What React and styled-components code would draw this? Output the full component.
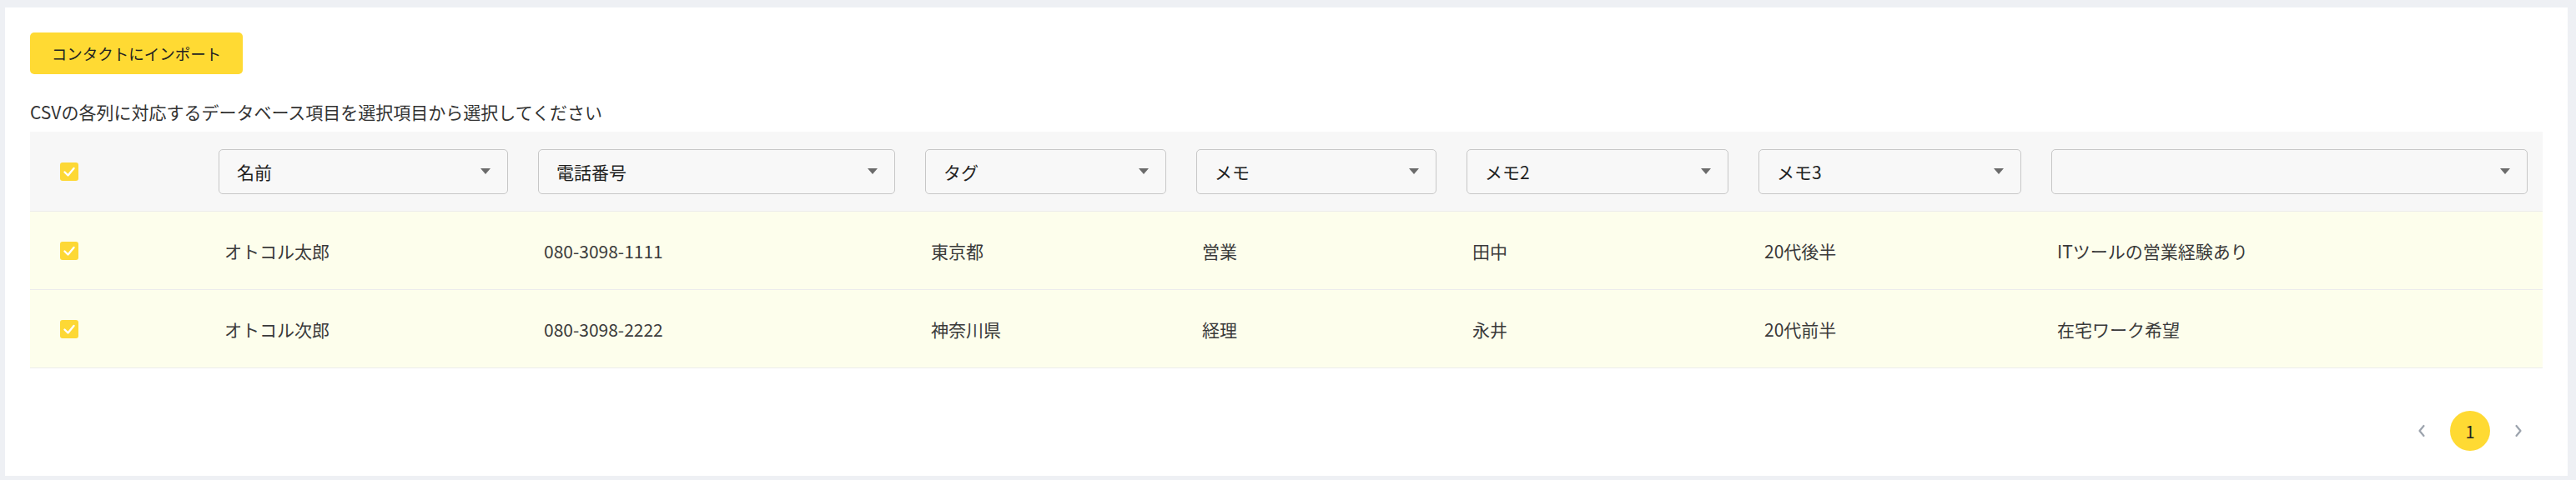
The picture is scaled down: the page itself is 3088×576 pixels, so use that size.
import React from 'react';
import styled, { createGlobalStyle } from 'styled-components';

const GlobalStyle = createGlobalStyle`
  body {
    margin: 0;
    background: #eef0f4;
    font-family: "Noto Sans CJK JP", "Noto Sans", sans-serif;
  }
`;

const columns = ['名前', '電話番号', 'タグ', 'メモ', 'メモ2', 'メモ3', ''];

const rows = [
  ['オトコル太郎', '080-3098-1111', '東京都', '営業', '田中', '20代後半', 'ITツールの営業経験あり'],
  ['オトコル次郎', '080-3098-2222', '神奈川県', '経理', '永井', '20代前半', '在宅ワーク希望'],
];

const Page = styled.div`
  padding: 9px 10px 5px 6px;
`;

const Panel = styled.section`
  background: #ffffff;
  height: 562px;
  box-sizing: border-box;
  padding: 30px;
  display: flex;
  flex-direction: column;
`;

const ImportButton = styled.button`
  align-self: flex-start;
  width: 255px;
  height: 50px;
  border: none;
  border-radius: 5px;
  background: #ffda33;
  color: #222222;
  font-family: inherit;
  font-size: 18.5px;
  cursor: pointer;
`;

const Guide = styled.p`
  margin: 30px 0 9px;
  font-size: 21px;
  line-height: 30px;
  color: #333333;
`;

const Table = styled.div`
  display: flex;
  flex-direction: column;
`;

const Row = styled.div`
  display: grid;
  grid-template-columns: 208px 383px 464px 325px 324px 350px 351px 1fr;
  align-items: center;
  height: ${(p) => (p.$head ? '96px' : '94px')};
  box-sizing: border-box;
  background: ${(p) => (p.$head ? '#f7f7f7' : '#fdfeec')};
  border-bottom: 1px solid #ececec;
`;

const CheckCell = styled.div`
  padding-left: 36px;
  display: flex;
  align-items: center;
`;

const Box = styled.span`
  width: 22px;
  height: 22px;
  border-radius: 3px;
  background: #fdd835;
  display: inline-flex;
  align-items: center;
  justify-content: center;

  svg {
    width: 22px;
    height: 22px;
  }
`;

const HeadCell = styled.div`
  padding: 0 18px;
`;

const Select = styled.div`
  height: 54px;
  box-sizing: border-box;
  border: 1px solid #c7c7c7;
  border-radius: 5px;
  background: #f8f8f8;
  display: flex;
  align-items: center;
  padding: 0 20px 0 21px;
  font-size: 21px;
  color: #1f1f1f;
`;

const Caret = styled.span`
  margin-left: auto;
  width: 0;
  height: 0;
  border-left: 6px solid transparent;
  border-right: 6px solid transparent;
  border-top: 7px solid #6b6b6b;
`;

const Cell = styled.div`
  padding-left: 25px;
  font-size: 21px;
  color: #3a3a3a;
  white-space: nowrap;
`;

const Pager = styled.nav`
  margin-top: auto;
  display: flex;
  justify-content: flex-end;
  align-items: center;
  gap: 18px;
  padding-right: 13px;
`;

const Arrow = styled.button`
  width: 32px;
  height: 32px;
  padding: 0;
  border: none;
  background: transparent;
  display: flex;
  align-items: center;
  justify-content: center;
`;

const PageNum = styled.span`
  width: 48px;
  height: 48px;
  border-radius: 50%;
  background: #ffda33;
  color: #222222;
  font-size: 20px;
  display: flex;
  align-items: center;
  justify-content: center;
`;

const Checkbox = () => (
  <Box>
    <svg viewBox="0 0 22 22">
      <polyline points="5.5,11.5 9.5,15.5 16.5,7" fill="none" stroke="#ffffff" strokeWidth="2.4" strokeLinecap="round" strokeLinejoin="round" />
    </svg>
  </Box>
);

const Chevron = ({ dir }) => (
  <svg width="10" height="16" viewBox="0 0 10 16">
    <polyline
      points={dir === 'left' ? '7.5,2 2.5,8 7.5,14' : '2.5,2 7.5,8 2.5,14'}
      fill="none"
      stroke="#9ca3ad"
      strokeWidth="2.2"
      strokeLinecap="round"
      strokeLinejoin="round"
    />
  </svg>
);

export default function App() {
  return (
    <Page>
      <GlobalStyle />
      <Panel>
        <ImportButton>コンタクトにインポート</ImportButton>
        <Guide>CSVの各列に対応するデータベース項目を選択項目から選択してください</Guide>
        <Table>
          <Row $head>
            <CheckCell>
              <Checkbox />
            </CheckCell>
            {columns.map((c, i) => (
              <HeadCell key={i}>
                <Select>
                  {c}
                  <Caret />
                </Select>
              </HeadCell>
            ))}
          </Row>
          {rows.map((r, i) => (
            <Row key={i}>
              <CheckCell>
                <Checkbox />
              </CheckCell>
              {r.map((v, j) => (
                <Cell key={j}>{v}</Cell>
              ))}
            </Row>
          ))}
        </Table>
        <Pager>
          <Arrow>
            <Chevron dir="left" />
          </Arrow>
          <PageNum>1</PageNum>
          <Arrow>
            <Chevron dir="right" />
          </Arrow>
        </Pager>
      </Panel>
    </Page>
  );
}
